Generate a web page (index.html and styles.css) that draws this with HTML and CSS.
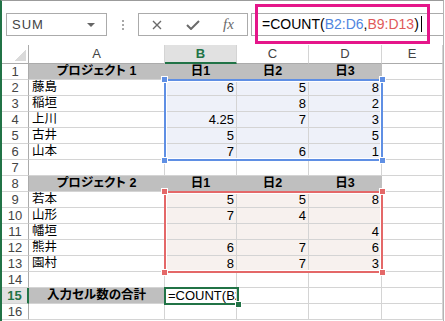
FILE: index.html
```html
<!DOCTYPE html>
<html lang="ja">
<head>
    <meta charset="UTF-8">
    <meta name="viewport" content="width=device-width, initial-scale=1.0">
    <title>COUNT 関数</title>
    <link rel="stylesheet" href="styles.css">
</head>
<body>
    <div class="window">
        <div class="toolbar">
            <div class="namebox"><span>SUM</span><span class="caret"></span></div>
            <div class="grip"><i></i><i></i><i></i></div>
            <div class="fbtns">
                <svg class="ico-x" width="10" height="10" viewBox="0 0 10 10"><path d="M1 1 L9 9 M9 1 L1 9" stroke="#6a6a6a" stroke-width="1.4" fill="none"/></svg>
                <svg class="ico-ok" width="14" height="10" viewBox="0 0 14 10"><path d="M1 5 L5 9 L13 1" stroke="#6a6a6a" stroke-width="2" fill="none"/></svg>
                <span class="ico-fx">fx</span>
            </div>
            <div class="fbar">
                <div class="formula">=COUNT(<span class="ref-b">B2:D6</span>,<span class="ref-r">B9:D13</span>)<span class="cursor"></span></div>
                <div class="callout"></div>
            </div>
        </div>

        <div class="sheet">
            <div class="corner"></div>
            <div class="ch">A</div><div class="ch on">B</div><div class="ch">C</div><div class="ch">D</div><div class="ch">E</div>

            <div class="rh">1</div><div class="c h">プロジェクト 1</div><div class="c h">日1</div><div class="c h">日2</div><div class="c h">日3</div><div class="c"></div>
            <div class="rh">2</div><div class="c t">藤島</div><div class="c n b">6</div><div class="c n b">5</div><div class="c n b">8</div><div class="c"></div>
            <div class="rh">3</div><div class="c t">稲垣</div><div class="c n b"></div><div class="c n b">8</div><div class="c n b">2</div><div class="c"></div>
            <div class="rh">4</div><div class="c t">上川</div><div class="c n b">4.25</div><div class="c n b">7</div><div class="c n b">3</div><div class="c"></div>
            <div class="rh">5</div><div class="c t">古井</div><div class="c n b">5</div><div class="c n b"></div><div class="c n b">5</div><div class="c"></div>
            <div class="rh">6</div><div class="c t">山本</div><div class="c n b">7</div><div class="c n b">6</div><div class="c n b">1</div><div class="c"></div>
            <div class="rh">7</div><div class="c"></div><div class="c"></div><div class="c"></div><div class="c"></div><div class="c"></div>
            <div class="rh">8</div><div class="c h">プロジェクト 2</div><div class="c h">日1</div><div class="c h">日2</div><div class="c h">日3</div><div class="c"></div>
            <div class="rh">9</div><div class="c t">若本</div><div class="c n r">5</div><div class="c n r">5</div><div class="c n r">8</div><div class="c"></div>
            <div class="rh">10</div><div class="c t">山形</div><div class="c n r">7</div><div class="c n r">4</div><div class="c n r"></div><div class="c"></div>
            <div class="rh">11</div><div class="c t">幡垣</div><div class="c n r"></div><div class="c n r"></div><div class="c n r">4</div><div class="c"></div>
            <div class="rh">12</div><div class="c t">熊井</div><div class="c n r">6</div><div class="c n r">7</div><div class="c n r">6</div><div class="c"></div>
            <div class="rh">13</div><div class="c t">園村</div><div class="c n r">8</div><div class="c n r">7</div><div class="c n r">3</div><div class="c"></div>
            <div class="rh">14</div><div class="c"></div><div class="c"></div><div class="c"></div><div class="c"></div><div class="c"></div>
            <div class="rh on">15</div><div class="c h">入力セル数の合計</div><div class="c edit">=COUNT(B2</div><div class="c"></div><div class="c"></div><div class="c"></div>
            <div class="rh">16</div><div class="c"></div><div class="c"></div><div class="c"></div><div class="c"></div><div class="c"></div>

            <!-- range highlights drawn over the cells -->
            <div class="range blue"><i class="tl"></i><i class="tr"></i><i class="bl"></i><i class="br"></i></div>
            <div class="range red"><i class="tl"></i><i class="tr"></i><i class="bl"></i><i class="br"></i></div>
            <div class="active"><i></i></div>
        </div>
    </div>
</body>
</html>
```

FILE: styles.css
```css
body {
    margin: 0;
    background: #ffffff;
    font-family: 'Liberation Sans', 'Noto Sans CJK JP', sans-serif;
}
.window {
    width: 441px;
    height: 320px;
    border-top: 1px solid #9b9b9b;
    border-left: 2px solid #217346;
    border-right: 1px solid #b4b4b4;
    overflow: hidden;
    background: #ffffff;
}

/* formula toolbar */
.toolbar {
    height: 44px;
    box-sizing: border-box;
    padding-top: 12px;
    display: flex;
    align-items: flex-start;
}
.namebox {
    width: 101px;
    height: 23px;
    margin-left: 4px;
    box-sizing: border-box;
    border: 1px solid #ababab;
    display: flex;
    align-items: center;
    justify-content: space-between;
    padding: 0 11px 0 5px;
    font-size: 13px;
    letter-spacing: 1px;
    color: #444;
}
.caret {
    width: 0;
    height: 0;
    border-left: 4px solid transparent;
    border-right: 4px solid transparent;
    border-top: 4px solid #666;
}
.grip {
    margin-left: 15px;
    padding-top: 7px;
    display: flex;
    flex-direction: column;
    gap: 2px;
}
.grip i {
    display: block;
    width: 2px;
    height: 2px;
    background: #a8a8a8;
}
.fbtns {
    width: 110px;
    height: 23px;
    margin-left: 14px;
    box-sizing: border-box;
    border: 1px solid #ababab;
    display: flex;
    align-items: center;
}
.ico-x { margin-left: 13px; }
.ico-ok { margin-left: 24px; }
.ico-fx {
    margin-left: 23px;
    font-family: 'Liberation Serif', serif;
    font-style: italic;
    font-size: 15px;
    color: #6a6a6a;
    line-height: 1;
}
.fbar {
    flex: 1;
    height: 23px;
    margin-left: 3px;
    box-sizing: border-box;
    border: 1px solid #ababab;
    border-right: none;
    position: relative;
}
.formula {
    padding-left: 10px;
    font-size: 14px;
    line-height: 21px;
    color: #000;
    white-space: nowrap;
}
.ref-b { color: #4f86e0; }
.ref-r { color: #e05a5a; }
.cursor {
    display: inline-block;
    width: 1px;
    height: 16px;
    margin-left: 2px;
    background: #000;
    vertical-align: -3px;
}
.callout {
    position: absolute;
    left: 3px;
    top: -10px;
    width: 175px;
    height: 40px;
    box-sizing: border-box;
    border: 3px solid #e5168a;
}

/* sheet grid */
.sheet {
    position: relative;
    display: grid;
    grid-template-columns: 27px 136px 72px 72px 73px 61px;
    grid-template-rows: 19px repeat(16, 16px);
}
.sheet > div {
    box-sizing: border-box;
}
.corner {
    position: relative;
    border-right: 1px solid #ababab;
    border-bottom: 1px solid #ababab;
}
.corner::after {
    content: '';
    position: absolute;
    right: 2px;
    bottom: 2px;
    width: 11px;
    height: 11px;
    background: linear-gradient(to bottom right, transparent 50%, #dadada 50%);
}
.ch {
    border-right: 1px solid #d4d4d4;
    border-bottom: 1px solid #ababab;
    text-align: center;
    font-size: 13px;
    line-height: 18px;
    color: #444;
}
.ch.on {
    background: #e1e1e1;
    border-bottom: 2px solid #217346;
    color: #217346;
    font-weight: bold;
}
.rh {
    border-right: 1px solid #ababab;
    border-bottom: 1px solid #d4d4d4;
    text-align: center;
    font-size: 13px;
    line-height: 16px;
    color: #444;
}
.rh.on {
    background: #e1e1e1;
    border-right: 2px solid #217346;
    color: #217346;
    font-weight: bold;
}
.c {
    border-right: 1px solid #d4d4d4;
    border-bottom: 1px solid #d4d4d4;
    font-size: 13px;
    line-height: 15px;
    color: #000;
    white-space: nowrap;
    overflow: hidden;
}
.c.t {
    padding-left: 3px;
    font-size: 12.5px;
}
.c.n {
    text-align: right;
    padding-right: 2px;
}
.c.h {
    background: #bfbfbf;
    border-right-color: transparent;
    text-align: center;
    font-weight: bold;
    font-size: 12.5px;
    font-feature-settings: "palt";
}
.c.b { background: #eef1f9; }
.c.r { background: #f7f1ee; }
.c.edit { padding-left: 3px; }

/* range outlines */
.range {
    position: absolute;
    left: 162px;
    width: 219px;
    height: 82px;
    box-sizing: border-box;
    border: 2px solid;
    box-shadow: inset 0 0 0 1px #ffffff;
}
.range.blue {
    top: 34px;
    border-color: #5f8fe4;
}
.range.red {
    top: 146px;
    border-color: #e46868;
}
.range i {
    position: absolute;
    width: 7px;
    height: 7px;
    box-sizing: border-box;
    border: 1px solid #ffffff;
}
.range.blue i { background: #5f8fe4; }
.range.red i { background: #e46868; }
.range .tl { left: -5px; top: -5px; }
.range .tr { right: -5px; top: -5px; }
.range .bl { left: -5px; bottom: -5px; }
.range .br { right: -5px; bottom: -5px; }
.active {
    position: absolute;
    left: 162px;
    top: 242px;
    width: 75px;
    height: 18px;
    box-sizing: border-box;
    border: 2px solid #217346;
}
.active i {
    position: absolute;
    right: -5px;
    bottom: -5px;
    width: 7px;
    height: 7px;
    box-sizing: border-box;
    border: 1px solid #ffffff;
    background: #217346;
}
```
